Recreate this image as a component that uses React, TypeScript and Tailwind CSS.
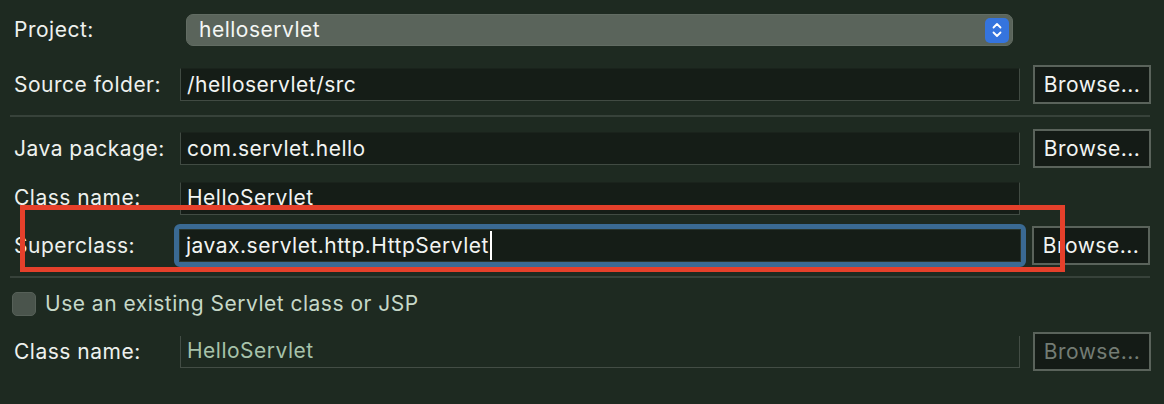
import React from 'react';

const font = { fontFamily: 'Inter, "Noto Sans", "Liberation Sans", sans-serif' };

function Field({ value, className = '' }: { value: string; className?: string }) {
    return (
        <div
            className={`flex shrink-0 items-center h-[33px] w-[840px] bg-[#151d17] border border-[#414b43] border-t-[#1a231c] pl-[6px] text-[#f2f4f2] ${className}`}
        >
            {value}
        </div>
    );
}

function BrowseButton({ disabled = false, gap = 'ml-[13px]' }: { disabled?: boolean; gap?: string }) {
    return (
        <div
            className={`flex shrink-0 items-center justify-center h-[39px] w-[118px] ${gap} bg-[#141b16] border-2 border-[#5a635b] ${
                disabled ? 'text-[#737c74]' : 'text-[#f2f4f2]'
            }`}
        >
            Browse...
        </div>
    );
}

function Label({ children }: { children: React.ReactNode }) {
    return <div className="w-[180px] shrink-0 pl-[14px] text-[#eef1ee]">{children}</div>;
}

export default function App() {
    return (
        <div
            className="relative w-[1164px] h-[404px] bg-[#1e2a21] overflow-hidden text-[21px] tracking-[0.5px]"
            style={font}
        >
            <div className="flex flex-col pt-[14px]">
                {/* Project */}
                <div className="flex items-center h-[32px]">
                    <Label>Project:</Label>
                    <div className="flex shrink-0 items-center justify-between ml-[6px] h-[32px] w-[827px] rounded-[7px] bg-[#5a645b] border border-[#626c63] pl-[12px] pr-[3px] text-[#f4f6f4]">
                        <span>helloservlet</span>
                        <div className="flex items-center justify-center h-[25px] w-[24px] rounded-[5px] bg-[#3574de]">
                            <svg width="12" height="18" viewBox="0 0 12 18" fill="none">
                                <path d="M2.5 6.5 L6 3 L9.5 6.5" stroke="white" strokeWidth="1.8" strokeLinecap="round" strokeLinejoin="round" />
                                <path d="M2.5 11.5 L6 15 L9.5 11.5" stroke="white" strokeWidth="1.8" strokeLinecap="round" strokeLinejoin="round" />
                            </svg>
                        </div>
                    </div>
                </div>

                {/* Source folder */}
                <div className="flex items-center h-[39px] mt-[19px]">
                    <Label>Source folder:</Label>
                    <Field value="/helloservlet/src" />
                    <BrowseButton />
                </div>

                <div className="mt-[11px] ml-[10px] h-[2px] w-[1140px] bg-[#37423a]" />

                {/* Java package */}
                <div className="flex items-center h-[39px] mt-[12px]">
                    <Label>Java package:</Label>
                    <Field value="com.servlet.hello" />
                    <BrowseButton />
                </div>

                {/* Class name */}
                <div className="flex items-center h-[32px] mt-[14px]">
                    <Label>Class name:</Label>
                    <Field value="HelloServlet" className="h-[32px]" />
                </div>

                {/* Superclass */}
                <div className="flex items-center h-[43px] mt-[10px]">
                    <Label>Superclass:</Label>
                    <div className="shrink-0 ml-[-6px] rounded-[6px] border-[5px] border-[#3a6a93] w-[852px]">
                        <div className="flex items-center h-[33px] bg-[#151d17] border border-[#2a352c] pl-[6px] text-[#f2f4f2]">
                            javax.servlet.http.HttpServlet
                            <span className="inline-block w-[2px] h-[29px] ml-[1px] bg-white" />
                        </div>
                    </div>
                    <BrowseButton gap="ml-[6px]" />
                </div>

                <div className="mt-[9px] ml-[10px] h-[2px] w-[1140px] bg-[#37423a]" />

                {/* Checkbox */}
                <div className="flex items-center h-[24px] mt-[14px] pl-[12px]">
                    <div className="h-[24px] w-[24px] rounded-[5px] bg-[#4a544c] border border-[#566058]" />
                    <span className="ml-[9px] text-[#c6d8c8]">Use an existing Servlet class or JSP</span>
                </div>

                {/* Class name disabled */}
                <div className="flex items-center h-[39px] mt-[16px]">
                    <Label>Class name:</Label>
                    <div className="flex shrink-0 items-center h-[32px] w-[840px] border-l border-b border-r border-[#434d45] pl-[6px] text-[#a7c2ab]">
                        HelloServlet
                    </div>
                    <BrowseButton disabled />
                </div>
            </div>

            {/* annotation box */}
            <div className="absolute left-[20px] top-[205px] w-[1045px] h-[67px] border-[5px] border-[#e5402b]" />
        </div>
    );
}
